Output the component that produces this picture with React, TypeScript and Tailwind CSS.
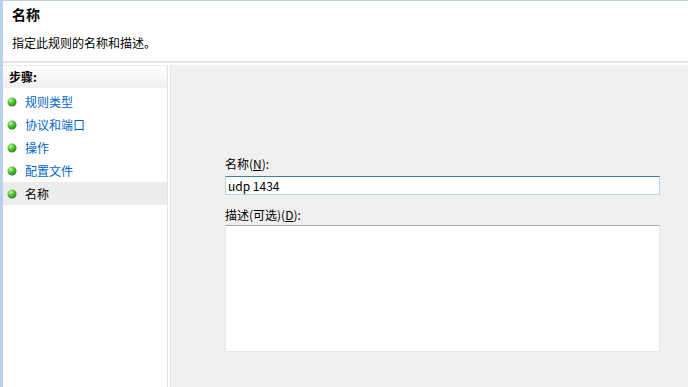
import React from "react";

const steps = [
  { label: "规则类型", active: false },
  { label: "协议和端口", active: false },
  { label: "操作", active: false },
  { label: "配置文件", active: false },
  { label: "名称", active: true },
];

const Bullet: React.FC = () => (
  <svg width="10" height="10" viewBox="0 0 10 10" className="shrink-0">
    <defs>
      <radialGradient id="g" cx="35%" cy="30%" r="70%">
        <stop offset="0%" stopColor="#c8f5a8" />
        <stop offset="45%" stopColor="#5cc83a" />
        <stop offset="100%" stopColor="#2f8a1c" />
      </radialGradient>
    </defs>
    <circle cx="5" cy="5" r="4.5" fill="url(#g)" />
  </svg>
);

const App: React.FC = () => {
  return (
    <div
      className="w-[688px] h-[387px] overflow-hidden flex bg-white text-[12px] text-black"
      style={{ fontFamily: '"Noto Sans CJK SC", "Liberation Sans", sans-serif' }}
    >
      {/* window edge */}
      <div className="w-[3px] bg-[#b9d1ea] shrink-0" />

      <div className="flex-1 flex flex-col">
        {/* Header */}
        <div className="h-[61px] shrink-0 border-t border-[#b9d1ea] px-[9px] pt-[3px]">
          <div className="text-[14px] font-bold leading-[20px]">名称</div>
          <div className="mt-[11px] leading-[16px]">指定此规则的名称和描述。</div>
        </div>
        <div className="h-[2px] bg-[#e6e6e6] shrink-0" />
        <div className="h-[2px] shrink-0" />

        {/* Body */}
        <div className="flex-1 flex">
          {/* Steps */}
          <div className="w-[165px] shrink-0 border-r border-[#e3e3e3] flex flex-col">
            <div className="h-[23px] bg-gradient-to-b from-white to-[#efefef] flex items-center pl-[6px] font-bold border-t border-[#ececec]">
              步骤:
            </div>
            <div className="flex flex-col pt-[2px]">
              {steps.map(({ label, active }) => (
                <div
                  key={label}
                  className={`h-[23px] flex items-center gap-[8px] pl-[4px] ${
                    active ? "bg-[#ececec] text-black" : "text-[#0066cc]"
                  }`}
                >
                  <Bullet />
                  <span className="leading-[16px]">{label}</span>
                </div>
              ))}
            </div>
          </div>

          <div className="w-[2px] shrink-0" />

          {/* Form */}
          <div className="flex-1 bg-[#f0f0f0] border-l border-[#e3e3e3] pl-[54px] pr-[28px] pt-[91px]">
            <div className="leading-[16px]">
              名称(<span className="underline">N</span>):
            </div>
            <div className="mt-[4px] h-[19px] bg-white border border-[#b5d7e6] border-t-[#3c7fb1] flex items-center px-[2px] leading-[16px]">
              udp 1434
            </div>
            <div className="mt-[12px] leading-[16px]">
              描述(可选)(<span className="underline">D</span>):
            </div>
            <div className="mt-[2px] h-[127px] bg-white border border-[#e3e9ef] border-t-[#ababab]" />
          </div>
        </div>
      </div>
    </div>
  );
};

export default App;
